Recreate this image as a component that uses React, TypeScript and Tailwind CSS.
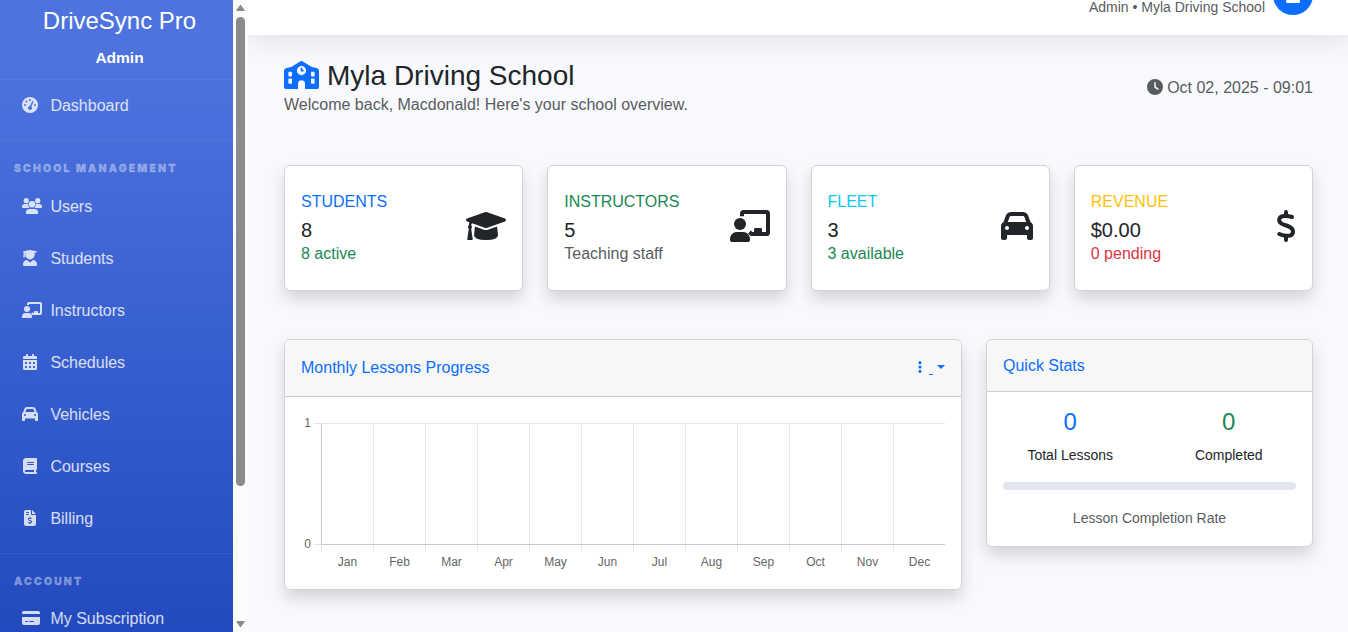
import React from "react";
import {
  FaGaugeHigh,
  FaCalendarDays,
  FaCar,
  FaBook,
  FaFileInvoiceDollar,
  FaCreditCard,
  FaClock,
  FaEllipsisVertical,
  FaUser,
} from "react-icons/fa6";

type Icon = React.ComponentType<{ className?: string }>;

const CARD =
  "rounded-[6px] border border-[#d2d3d4] bg-white bg-clip-border shadow-[0_8px_16px_rgba(0,0,0,0.15)]";

const UsersIcon: Icon = ({ className }) => (
  <svg className={className} viewBox="0 0 640 512" fill="currentColor">
    <circle cx="136" cy="84" r="84" />
    <circle cx="504" cy="84" r="84" />
    <circle cx="320" cy="200" r="104" />
    <path d="M96 192H178Q190 192 200 197Q192 250 232 300Q240 312 240 320H22Q0 320 0 298Q0 192 96 192Z" />
    <path d="M544 192H462Q450 192 440 197Q448 250 408 300Q400 312 400 320H618Q640 320 640 298Q640 192 544 192Z" />
    <path d="M252 352H388Q520 352 520 480Q520 512 490 512H150Q120 512 120 480Q120 352 252 352Z" />
  </svg>
);

const GraduateIcon: Icon = ({ className }) => (
  <svg className={className} viewBox="-32 0 512 512" fill="currentColor">
    <path d="M224 0L436 36Q448 40 448 54Q448 68 436 72L374 86V150A150 150 0 0 1 74 150V86L60 82V150L72 230H4L18 150V72L12 72Q0 68 0 54Q0 40 12 36Z" />
    <path d="M126 322L224 400L322 322Q448 340 448 470Q448 512 410 512H38Q0 512 0 470Q0 340 126 322Z" />
  </svg>
);

const TeacherIcon: Icon = ({ className }) => (
  <svg className={className} viewBox="0 0 640 512" fill="currentColor">
    <circle cx="160" cy="224" r="96" />
    <path d="M112 352H208Q320 356 320 480Q320 512 292 512H28Q0 512 0 480Q0 356 112 352Z" />
    <path
      d="M192 98V58Q192 32 218 32H582Q608 32 608 58V358Q608 384 582 384H344Q330 368 312 352"
      fill="none"
      stroke="currentColor"
      strokeWidth="64"
    />
    <path d="M384 384V310Q384 288 406 288H490Q512 288 512 310V384Z" />
  </svg>
);

const CapIcon: Icon = ({ className }) => (
  <svg className={className} viewBox="0 0 640 512" fill="currentColor">
    <path d="M623 137L341 36Q320 28 299 36L17 137Q0 144 0 160Q0 176 17 183L56 197Q46 215 45 245Q32 255 32 272Q32 288 45 297L20 468Q19 480 30 480H98Q109 480 107 468L83 297Q96 288 96 272Q96 256 83 248Q84 225 98 212L299 284Q320 292 341 284L623 183Q640 176 640 160Q640 144 623 137Z" />
    <path d="M352 315Q320 326 288 315L143 263L128 405Q128 480 320 480Q512 480 512 405L497 263Z" />
  </svg>
);

const DollarIcon: Icon = ({ className }) => (
  <svg
    className={className}
    viewBox="0 0 320 512"
    fill="none"
    stroke="currentColor"
    strokeWidth="64"
    strokeLinecap="round"
    strokeLinejoin="round"
  >
    <path d="M160 32V88M160 420V480" />
    <path d="M256 112C196 92 50 74 50 162C50 262 272 226 272 346C272 440 124 418 52 384" />
  </svg>
);

const SchoolIcon: Icon = ({ className }) => (
  <svg className={className} viewBox="0 0 640 512" fill="currentColor">
    <path
      fillRule="evenodd"
      d="M46 128L132 108L302 6Q320 -4 338 6L508 108L594 128Q640 138 640 176V464Q640 512 592 512H48Q0 512 0 464V176Q0 138 46 128ZM320 92A84 84 0 1 0 320 260A84 84 0 1 0 320 92ZM96 196Q80 196 80 212V266Q80 282 96 282H130Q146 282 146 266V212Q146 196 130 196ZM510 196Q494 196 494 212V266Q494 282 510 282H544Q560 282 560 266V212Q560 196 544 196ZM96 318Q80 318 80 334V398Q80 414 96 414H130Q146 414 146 398V334Q146 318 130 318ZM510 318Q494 318 494 334V398Q494 414 510 414H544Q560 414 560 398V334Q560 318 544 318ZM256 512V416A64 64 0 0 1 384 416V512Z"
    />
    <path d="M320 136V176H346" fill="none" stroke="currentColor" strokeWidth="32" strokeLinecap="round" />
  </svg>
);

function NavItem({ icon: Glyph, label, size }: { icon: Icon; label: string; size: string }) {
  return (
    <a className="flex h-[52px] items-center pl-[22px] text-white/80">
      <span className="mb-[2px] flex w-[28.4px] shrink-0 items-center">
        <Glyph className={`h-4 shrink-0 ${size}`} />
      </span>
      <span className="text-base leading-6">{label}</span>
    </a>
  );
}

function SectionLabel({ children }: { children: string }) {
  return (
    <div className="pl-[14px] font-['Inter','Liberation_Sans',sans-serif] text-[10.4px] leading-[14px] font-black tracking-[2.2px] text-white/40 [-webkit-text-stroke:0.3px_rgba(255,255,255,0.3)]">
      {children}
    </div>
  );
}

const schoolItems: { icon: Icon; label: string; size: string }[] = [
  { icon: UsersIcon, label: "Users", size: "w-[20px]" },
  { icon: GraduateIcon, label: "Students", size: "w-[16px]" },
  { icon: TeacherIcon, label: "Instructors", size: "w-[20px]" },
  { icon: FaCalendarDays, label: "Schedules", size: "w-[16px]" },
  { icon: FaCar, label: "Vehicles", size: "w-[16px]" },
  { icon: FaBook, label: "Courses", size: "w-[16px]" },
  { icon: FaFileInvoiceDollar, label: "Billing", size: "w-[16px]" },
];

function Sidebar() {
  return (
    <aside className="flex h-full w-[248px] shrink-0">
      <nav className="h-full w-[233px] overflow-hidden bg-linear-to-b from-[#4e73df] from-10% to-[#224abe]">
        <div className="flex h-[80px] flex-col items-center border-b border-white/5 pl-[6px] text-white">
          <div className="mt-[6px] text-2xl leading-[29px]">DriveSync Pro</div>
          <div className="mt-[11px] text-[15.5px] leading-6 font-bold">Admin</div>
        </div>
        <div className="h-[61px] border-b border-white/5">
          <NavItem icon={FaGaugeHigh} label="Dashboard" size="w-[16px]" />
        </div>
        <div className="h-[413px] border-b border-white/5 pt-[21px]">
          <SectionLabel>SCHOOL MANAGEMENT</SectionLabel>
          <div className="pt-[5px]">
            {schoolItems.map((it) => (
              <NavItem key={it.label} icon={it.icon} label={it.label} size={it.size} />
            ))}
          </div>
        </div>
        <div className="pt-[21px]">
          <SectionLabel>ACCOUNT</SectionLabel>
          <div className="pt-[4px]">
            <NavItem icon={FaCreditCard} label="My Subscription" size="w-[18px]" />
          </div>
        </div>
      </nav>
      <div className="flex h-full w-[15px] flex-col items-center bg-[#fcfcfc]">
        <svg className="mt-[4px] h-[7px] w-[9px]" viewBox="0 0 9 7">
          <path d="M4.5 0.5 L8.6 6 Q8.8 7 8 7 H1 Q0.2 7 0.4 6 Z" fill="#8b8b8b" />
        </svg>
        <div className="mt-[6px] h-[469px] w-[9px] rounded-full bg-[#8b8b8b]" />
        <svg className="mt-auto mb-[4px] h-[7px] w-[9px]" viewBox="0 0 9 7">
          <path d="M4.5 6.5 L8.6 1 Q8.8 0 8 0 H1 Q0.2 0 0.4 1 Z" fill="#8b8b8b" />
        </svg>
      </div>
    </aside>
  );
}

function StatCard(props: {
  title: string;
  titleColor: string;
  value: string;
  note: string;
  noteColor: string;
  icon: Icon;
  size: string;
}) {
  const Glyph = props.icon;
  return (
    <div className={`flex h-[126px] items-center justify-between px-4 ${CARD}`}>
      <div>
        <div className={`text-base leading-6 ${props.titleColor}`}>{props.title}</div>
        <div className="mt-[4px] text-xl leading-6 text-[#212529]">{props.value}</div>
        <div className={`text-base leading-6 ${props.noteColor}`}>{props.note}</div>
      </div>
      <Glyph className={`mt-[-4px] h-8 shrink-0 text-[#212529] ${props.size}`} />
    </div>
  );
}

const months = ["Jan", "Feb", "Mar", "Apr", "May", "Jun", "Jul", "Aug", "Sep", "Oct", "Nov", "Dec"];

function LessonsChart() {
  return (
    <svg className="block h-[160px] w-[644px]" viewBox="0 0 644 160">
      <g stroke="#e5e5e5" strokeWidth="1">
        {months.map((m, i) => (
          <line key={m} x1={20.5 + 52 * i} x2={20.5 + 52 * i} y1="10" y2="139" />
        ))}
        <line x1="13" x2="644" y1="10.5" y2="10.5" />
        <line x1="13" x2="644" y1="131.5" y2="131.5" />
      </g>
      <g stroke="#cacaca" strokeWidth="1">
        <line x1="20.5" x2="20.5" y1="10" y2="132" />
        <line x1="20" x2="644" y1="131.5" y2="131.5" />
      </g>
      <g fill="#666666" fontSize="12">
        <text x="10" y="14" textAnchor="end">1</text>
        <text x="10" y="135" textAnchor="end">0</text>
        {months.map((m, i) => (
          <text key={m} x={46.5 + 52 * i} y="153" textAnchor="middle">
            {m}
          </text>
        ))}
      </g>
    </svg>
  );
}

export default function App() {
  return (
    <div className="flex h-[632px] w-[1348px] overflow-hidden bg-[#f8f9fc] font-['Liberation_Sans',Arial,sans-serif] text-[#212529]">
      <Sidebar />
      <main className="flex h-full w-[1100px] flex-col overflow-hidden">
        <header className="flex h-[35px] shrink-0 items-end justify-end bg-white pr-[35px] shadow-[0_2.4px_28px_rgba(58,59,69,0.15)]">
          <div className="mb-[17px] text-sm leading-[21px] text-[#595c5f]">Admin • Myla Driving School</div>
          <div className="mb-[20px] ml-2 flex h-10 w-10 shrink-0 items-center justify-center rounded-full bg-[#0d6efd] text-white">
            <FaUser className="h-4 w-[14px]" />
          </div>
        </header>

        <div className="pr-[35px] pl-[36px]">
          <div className="flex h-[130px] items-start justify-between">
            <div className="pt-[24px]">
              <h1 className="flex h-[34px] items-center text-[28px] leading-[34px]">
                <SchoolIcon className="mr-2 mb-[2px] h-[28px] w-[35px] text-[#0d6efd]" />
                Myla Driving School
              </h1>
              <p className="text-base leading-6 text-[#595c5f]">
                Welcome back, Macdonald! Here's your school overview.
              </p>
            </div>
            <div className="mt-[41px] flex items-center text-base leading-6 text-[#595c5f]">
              <FaClock className="mr-[4px] mb-[2px] h-4 w-4" />
              Oct 02, 2025 - 09:01
            </div>
          </div>

          <div className="grid grid-cols-4 gap-6">
            <StatCard title="STUDENTS" titleColor="text-[#0d6efd]" value="8" note="8 active" noteColor="text-[#198754]" icon={CapIcon} size="w-[40px]" />
            <StatCard title="INSTRUCTORS" titleColor="text-[#198754]" value="5" note="Teaching staff" noteColor="text-[#595c5f]" icon={TeacherIcon} size="w-[40px]" />
            <StatCard title="FLEET" titleColor="text-[#0dcaf0]" value="3" note="3 available" noteColor="text-[#198754]" icon={FaCar} size="w-[32px]" />
            <StatCard title="REVENUE" titleColor="text-[#ffc107]" value="$0.00" note="0 pending" noteColor="text-[#dc3545]" icon={DollarIcon} size="w-[20px]" />
          </div>

          <div className="mt-12 flex items-start gap-6">
            <section className={`h-[251px] w-[678px] overflow-hidden ${CARD}`}>
              <div className="flex h-[57px] items-center justify-between border-b border-[#cdcecf] bg-[#f7f7f7] px-4">
                <h2 className="text-base leading-5 text-[#0d6efd]">Monthly Lessons Progress</h2>
                <div className="flex items-center text-[#0d6efd]">
                  <FaEllipsisVertical className="mb-[2px] h-[14px] w-[4px]" />
                  <span className="mt-[13px] ml-[7px] h-px w-[4px] bg-[#0d6efd]" />
                  <span className="mb-[2px] ml-[4px] border-x-4 border-t-4 border-x-transparent border-t-[#0d6efd]" />
                </div>
              </div>
              <div className="p-4">
                <LessonsChart />
              </div>
            </section>

            <section className={`h-[208px] w-[327px] overflow-hidden ${CARD}`}>
              <div className="flex h-[52px] items-center border-b border-[#cdcecf] bg-[#f7f7f7] px-4">
                <h2 className="text-base leading-5 text-[#0d6efd]">Quick Stats</h2>
              </div>
              <div className="px-4 pt-[15px]">
                <div className="grid grid-cols-2 gap-6 text-center">
                  <div>
                    <div className="text-2xl leading-[29px] text-[#0d6efd]">0</div>
                    <div className="mt-[9px] text-sm leading-[21px]">Total Lessons</div>
                  </div>
                  <div>
                    <div className="text-2xl leading-[29px] text-[#198754]">0</div>
                    <div className="mt-[9px] text-sm leading-[21px]">Completed</div>
                  </div>
                </div>
                <div className="mt-4 h-2 rounded-full bg-[#e3e6f0]" />
                <div className="mt-[18px] text-center text-sm leading-[21px] text-[#595c5f]">
                  Lesson Completion Rate
                </div>
              </div>
            </section>
          </div>
        </div>
      </main>
    </div>
  );
}
